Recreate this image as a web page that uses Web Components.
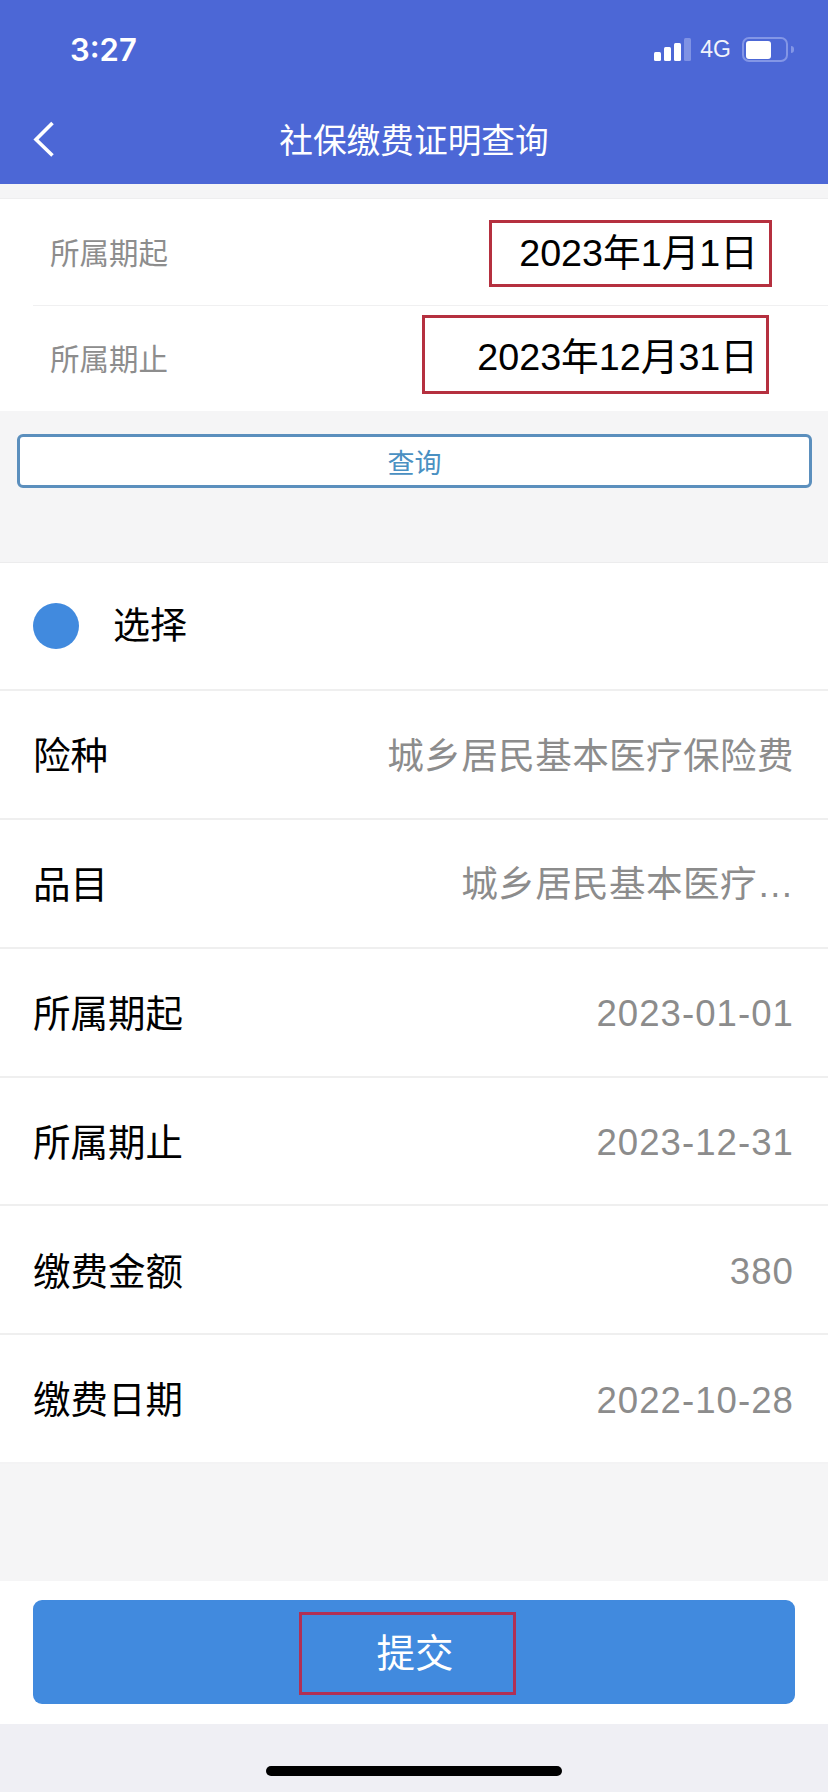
<!DOCTYPE html>
<html lang="zh-CN"><head><meta charset="utf-8"><title>社保缴费证明查询</title>
<style>
html,body{margin:0;padding:0;background:#f5f5f6}
body{font-family:"Liberation Sans","Noto Sans CJK SC",sans-serif}
#app{width:828px;height:1792px;display:flex;flex-direction:column;overflow:hidden}
</style></head><body>
<div id="app">
<app-header>社保缴费证明查询</app-header>
<period-card>
  <period-row label="所属期起" value="2023年1月1日" box="283" bh="67" mt="21" mr="56" lt="39" pr="11" pt="0"></period-row>
  <period-row label="所属期止" value="2023年12月31日" box="347" bh="79" mt="9" mr="59" lt="38" pr="8" pt="7" sep></period-row>
</period-card>
<query-button>查询</query-button>
<info-list>
  <select-row>选择</select-row>
  <info-row label="险种">城乡居民基本医疗保险费</info-row>
  <info-row label="品目">城乡居民基本医疗…</info-row>
  <info-row label="所属期起" num>2023-01-01</info-row>
  <info-row label="所属期止" num>2023-12-31</info-row>
  <info-row label="缴费金额" num>380</info-row>
  <info-row label="缴费日期" num>2022-10-28</info-row>
</info-list>
<submit-bar>提交</submit-bar>
<home-bar></home-bar>
</div>
<script>
function def(name,css,html){
  customElements.define(name,class extends HTMLElement{
    constructor(){super();const r=this.attachShadow({mode:'open'});
      r.innerHTML='<style>'+css+'</style>'+(typeof html==='function'?html(this):html);}
  });
}
const attr=(el,a)=>el.getAttribute(a)||'';
def('app-header',`
 :host{display:block;height:184px;flex:none;background:#4c67d6;color:#fff}
 .status{height:94px;display:flex;align-items:flex-start;box-sizing:border-box;padding:33px 34px 0 70px}
 .time{font:600 31px/34px Inter,"Liberation Sans",sans-serif;flex:1}
 .sig{display:flex;align-items:flex-end;gap:3px;height:23px;margin:5px 0 0;}
 .sig i{display:block;width:7px;background:#fff;border-radius:1.5px}
 .g{font:400 23px/26px "Liberation Sans",sans-serif;margin:3px 11px 0 9px;opacity:.92}
 .bat{width:46px;height:25px;box-sizing:border-box;border:2.5px solid #8396e6;border-radius:7px;margin-top:4px;padding:1.5px;display:flex}
 .bat b{display:block;width:25px;background:#fff;border-radius:3px}
 .nub{width:3px;height:7px;margin:13px 0 0 3px;background:#8396e6;border-radius:0 3px 3px 0}
 .nav{height:90px;display:flex;align-items:center;position:relative;box-sizing:border-box}
 svg{display:block;margin-left:32px;flex:none}
 .t{position:absolute;left:0;right:0;top:29px;text-align:center;font:400 33.7px/36px "Liberation Sans","Noto Sans CJK SC",sans-serif}
`,`<div class="status"><div class="time">3:27</div>
 <div class="sig"><i style="height:9px"></i><i style="height:14px"></i><i style="height:18px"></i><i style="height:23px;background:#7f92e4"></i></div>
 <div class="g">4G</div><div class="bat"><b></b></div><div class="nub"></div></div>
 <div class="nav"><svg width="24" height="36" viewBox="0 0 24 36"><path d="M20.5 2 L4 18.5 L20.5 34.5" fill="none" stroke="#fff" stroke-width="3.6"/></svg><div class="t"><slot></slot></div></div>`);
def('period-card',`:host{display:block;flex:none;margin-top:14px;background:#fff;border-top:1px solid #eeeeef}`,`<slot></slot>`);
def('period-row',`
 :host{display:block}
 .sep{height:1px;background:#f0f0f1;margin-left:33px}
 .r{height:105.5px;display:flex;justify-content:space-between;align-items:flex-start;box-sizing:border-box;padding-left:50px}
 .l{font-size:29.5px;line-height:32px;color:#8d8d8d}
 .v{box-sizing:border-box;border:3.5px solid #b5303f;display:flex;align-items:center;justify-content:flex-end;font-size:37.7px;line-height:1;color:#000;white-space:nowrap}
`,el=>`${el.hasAttribute('sep')?'<div class="sep"></div>':''}<div class="r"><div class="l" style="margin-top:${attr(el,'lt')}px">${attr(el,'label')}</div><div class="v" style="width:${attr(el,'box')}px;height:${attr(el,'bh')}px;margin:${attr(el,'mt')}px ${attr(el,'mr')}px 0 0;padding:${attr(el,'pt')}px ${attr(el,'pr')}px 0 0">${attr(el,'value')}</div></div>`);
def('query-button',`
 :host{display:flex;flex:none;box-sizing:border-box;margin:23px 16px 74px 17px;height:54px;background:#fff;border:3px solid #5b8fbd;border-radius:6px;align-items:center;justify-content:center;color:#4a90c2;font-size:27px;line-height:1;padding-top:6px}
`,`<slot></slot>`);
def('info-list',`:host{display:block;flex:none;background:#fff;border-top:1px solid #ececed}`,`<slot></slot>`);
def('select-row',`
 :host{display:flex;align-items:center;box-sizing:border-box;height:128px;border-bottom:2px solid #efefef;padding-left:33px;font-size:37px;line-height:1;color:#000}
 i{display:block;width:46px;height:46px;border-radius:50%;background:#418ade;margin-right:34px;flex:none}
 span{margin-top:1px}
`,`<i></i><span><slot></slot></span>`);
def('info-row',`
 :host{display:flex;align-items:center;justify-content:space-between;box-sizing:border-box;height:128.85px;border-bottom:2px solid #efefef;padding:5px 34px 0 33px;font-size:37.5px;line-height:1;white-space:nowrap}
 :host(:last-child){border-bottom-color:#f3f3f4}
 .l{color:#000}.v{color:#8c8c8c;font-size:36.6px;letter-spacing:.4px}
 :host([num]) .v{letter-spacing:1.05px}
`,el=>`<div class="l">${attr(el,'label')}</div><div class="v"><slot></slot></div>`);
def('submit-bar',`
 :host{display:block;flex:none;margin-top:auto;height:143px;box-sizing:border-box;background:#fff;padding:19px 33px 20px}
 .b{height:104px;border-radius:9px;background:#418ade;display:flex;flex-direction:column;align-items:center;color:#fff;font-size:38.5px;line-height:1}
 .x{box-sizing:border-box;width:217px;height:83px;margin:12px 0 0 -14px;border:3.5px solid #b03055;display:flex;align-items:center;justify-content:center}
 span{margin:2px 0 0 16px;white-space:nowrap}
`,`<div class="b"><div class="x"><span><slot></slot></span></div></div>`);
def('home-bar',`
 :host{display:block;flex:none;height:68px;background:#efeff4;box-sizing:border-box;padding-top:42px}
 i{display:block;width:296px;height:10px;border-radius:5px;background:#000;margin:0 0 0 266px}
`,`<i></i>`);
</script>
</body></html>
